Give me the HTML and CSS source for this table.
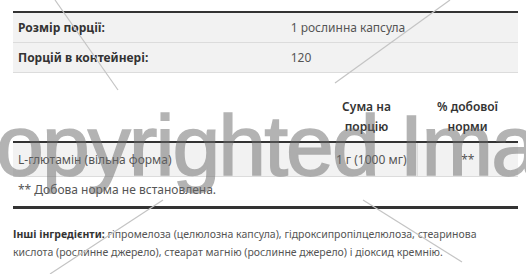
FILE: index.html
```html
<!DOCTYPE html>
<html lang="uk">
<head>
<meta charset="utf-8">
<title>Факти про добавку</title>
<link rel="stylesheet" href="styles.css">
</head>
<body>
<div class="page">
  <table class="serving">
    <tbody>
      <tr><th class="label">Розмір порції:</th><td class="value">1 рослинна капсула</td></tr>
      <tr><th class="label">Порцій в контейнері:</th><td class="value">120</td></tr>
    </tbody>
  </table>

  <table class="facts">
    <thead>
      <tr>
        <th class="c-name"></th>
        <th class="c-amt">Сума на порцію</th>
        <th class="c-dv">% добової норми</th>
      </tr>
    </thead>
    <tbody>
      <tr>
        <td class="c-name">L-глютамін (вільна форма)</td>
        <td class="c-amt amt">1 г (1000 мг)</td>
        <td class="c-dv dv">**</td>
      </tr>
    </tbody>
  </table>
  <p class="note">** Добова норма не встановлена.</p>
  <div class="rule"></div>
  <p class="other"><b>Інші інгредієнти:</b> гіпромелоза (целюлозна капсула), гідроксипропілцелюлоза, стеаринова кислота (рослинне джерело), стеарат магнію (рослинне джерело) і діоксид кремнію.</p>
</div>

<div class="watermark" aria-hidden="true">
  <svg class="wm-lines" width="526" height="274" viewBox="0 0 526 274">
    <g stroke="#c4c4c4" stroke-width="1.2" fill="none">
      <line x1="55" y1="0" x2="118" y2="90"/>
      <line x1="450" y1="0" x2="335" y2="83"/>
      <line x1="163" y1="200" x2="50" y2="274"/>
      <line x1="363" y1="200" x2="462" y2="262"/>
    </g>
  </svg>
  <span class="wm-text">Copyrighted Image</span>
</div>
</body>
</html>
```

FILE: styles.css
```css
html, body {
  margin: 0;
  padding: 0;
  background: #fff;
}
body {
  font-family: "Noto Sans", "Open Sans", sans-serif;
  color: #555;
  font-size: 12px;
  width: 526px;
  height: 274px;
  overflow: hidden;
  position: relative;
}
.page {
  padding: 11px 8px 0 13px;
}
table {
  width: 505px;
  border-collapse: collapse;
}
.serving {
  border-top: 2px solid #333;
}
.serving tr {
  background: #f2f2f2;
  border-bottom: 1px solid #dcdcdc;
}
.serving th, .serving td {
  height: 29px;
  padding: 0 5px;
  text-align: left;
  vertical-align: middle;
}
.serving .label {
  width: 54%;
  font-weight: 700;
  color: #333;
}
.serving .value {
  color: #555;
}
.facts {
  margin-top: 24px;
}
.facts thead th {
  font-weight: 600;
  color: #333;
  text-align: center;
  line-height: 20px;
  padding: 0 10px 4px;
  vertical-align: bottom;
}
.facts thead tr {
  border-bottom: 2px solid #333;
}
.facts .c-name { width: 60%; text-align: left; }
.facts .c-amt { width: 20%; }
.facts .c-dv { width: 20%; }
.facts tbody tr {
  background: #f2f2f2;
  border-bottom: 1px solid #dcdcdc;
}
.facts tbody td {
  height: 33px;
  padding: 0 5px;
  vertical-align: middle;
}
.facts .amt {
  text-align: right;
  padding-right: 10px;
  border-right: 1px solid #dcdcdc;
}
.facts .dv {
  text-align: center;
}
.note {
  margin: 0;
  padding: 3px 5px 0;
  line-height: 20px;
}
.rule {
  width: 505px;
  height: 3px;
  background: #333;
  margin-top: 6px;
}
.other {
  margin: 16px 0 0;
  padding: 0 3px 0 0;
  font-size: 10.5px;
  line-height: 18px;
  color: #555;
}
.other b {
  color: #333;
  font-weight: 700;
}
.watermark {
  position: absolute;
  inset: 0;
  pointer-events: none;
  overflow: hidden;
}
.wm-lines {
  position: absolute;
  left: 0;
  top: 0;
}
.wm-text {
  position: absolute;
  left: -64px;
  top: 102px;
  font-family: "Liberation Sans", Arial, sans-serif;
  font-size: 86px;
  line-height: 86px;
  letter-spacing: -2px;
  white-space: nowrap;
  color: #6a6a6a;
  -webkit-text-stroke: 1.5px #6a6a6a;
  opacity: 0.5;
}
```
